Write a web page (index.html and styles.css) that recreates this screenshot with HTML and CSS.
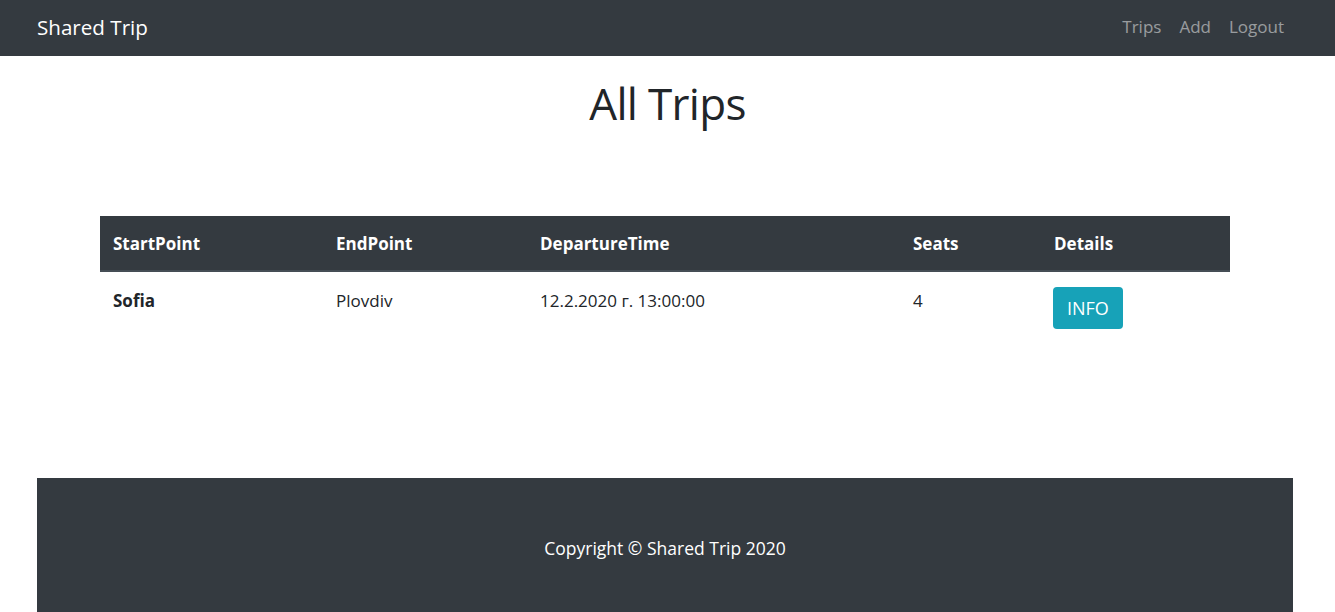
FILE: index.html
```html
<!DOCTYPE html>
<html lang="en">
<head>
<meta charset="utf-8">
<title>Shared Trip</title>
<link rel="stylesheet" href="styles.css">
</head>
<body>
<header class="navbar">
  <a class="brand" href="#">Shared Trip</a>
  <nav class="nav">
    <a class="nav-link" href="#">Trips</a>
    <a class="nav-link" href="#">Add</a>
    <a class="nav-link" href="#">Logout</a>
  </nav>
</header>
<main class="main">
  <h1 class="title">All Trips</h1>
  <table class="trips">
    <colgroup>
      <col class="c1"><col class="c2"><col class="c3"><col class="c4"><col class="c5">
    </colgroup>
    <thead>
      <tr>
        <th>StartPoint</th>
        <th>EndPoint</th>
        <th>DepartureTime</th>
        <th>Seats</th>
        <th>Details</th>
      </tr>
    </thead>
    <tbody>
      <tr>
        <th>Sofia</th>
        <td>Plovdiv</td>
        <td>12.2.2020 г. 13:00:00</td>
        <td>4</td>
        <td><a class="btn-info" href="#">INFO</a></td>
      </tr>
    </tbody>
  </table>
</main>
<footer class="footer">
  <p>Copyright © Shared Trip 2020</p>
</footer>
</body>
</html>
```

FILE: styles.css
```css
* { box-sizing: border-box; }
html, body { margin: 0; padding: 0; }
body {
  font-family: "Open Sans", "Noto Sans", "Liberation Sans", sans-serif;
  font-size: 16px;
  line-height: 1.5;
  color: #212529;
  background: #fff;
  overflow: hidden;
}
a { text-decoration: none; }

.navbar {
  height: 56px;
  background: #343a40;
  display: flex;
  align-items: center;
  justify-content: space-between;
  padding: 0 43px 2px 37px;
}
.brand {
  color: #fff;
  font-size: 20.6px;
  line-height: 30px;
}
.nav { display: flex; }
.nav-link {
  color: rgba(255,255,255,0.5);
  padding: 8px 8px;
  font-size: 17px;
}
.nav-link:first-child { margin-right: 2px; }
.nav-link:nth-child(2) { margin-right: 2px; }

.main {
  padding: 21px 100px 0 100px;
  height: 422px;
}
.title {
  margin: 0 0 86px;
  text-align: center;
  font-size: 44px;
  font-weight: 400;
  line-height: 1.2;
  letter-spacing: -0.7px;
}
.trips {
  width: 1130px;
  border-collapse: collapse;
  table-layout: fixed;
  font-size: 17px;
}
.c1 { width: 223px; }
.c2 { width: 204px; }
.c3 { width: 373px; }
.c4 { width: 141px; }
.c5 { width: 189px; }
.trips thead th {
  background: #343a40;
  color: #fff;
  font-weight: 700;
  text-align: left;
  line-height: 24px;
  padding: 16px 13px 14px;
  border-bottom: 2px solid #454d55;
}
.trips tbody th, .trips tbody td {
  text-align: left;
  vertical-align: top;
  line-height: 24px;
  padding: 17px 13px 12px;
}
.trips tbody th { font-weight: 700; }
.trips tbody td:last-child { padding-top: 15px; }
.btn-info {
  display: inline-block;
  background: #17a2b8;
  color: #fff;
  font-size: 18px;
  line-height: 28px;
  padding: 7px 14px 7px;
  border-radius: 4px;
  margin-left: -1px;
}

.footer {
  margin: 0 42px 0 37px;
  background: #343a40;
  color: #fff;
  text-align: center;
  height: 160px;
  padding-top: 57px;
}
.footer p { margin: 0; font-size: 17.5px; }
```
